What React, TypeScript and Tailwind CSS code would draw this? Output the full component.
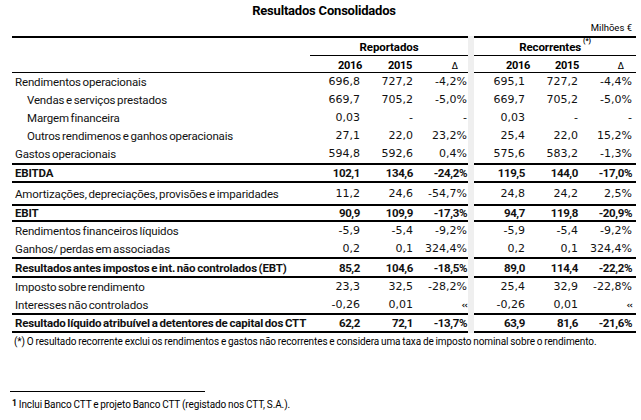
import React from "react";

type R = {
  label: string;
  v: string[];
  bold?: boolean;
  indent?: boolean;
  h: string;
  thick?: boolean;
};

const rows: R[] = [
  { label: "Rendimentos operacionais", v: ["696,8", "727,2", "-4,2%", "695,1", "727,2", "-4,4%"], h: "h-[18px]" },
  { label: "Vendas e serviços prestados", v: ["669,7", "705,2", "-5,0%", "669,7", "705,2", "-5,0%"], h: "h-[18px]", indent: true },
  { label: "Margem financeira", v: ["0,03", "-", "-", "0,03", "-", "-"], h: "h-[18px]", indent: true },
  { label: "Outros rendimenos e ganhos operacionais", v: ["27,1", "22,0", "23,2%", "25,4", "22,0", "15,2%"], h: "h-[18px]", indent: true },
  { label: "Gastos operacionais", v: ["594,8", "592,6", "0,4%", "575,6", "583,2", "-1,3%"], h: "h-[20px]", thick: true },
  { label: "EBITDA", v: ["102,1", "134,6", "-24,2%", "119,5", "144,0", "-17,0%"], h: "h-[18px]", thick: true, bold: true },
  { label: "Amortizações, depreciações, provisões e imparidades", v: ["11,2", "24,6", "-54,7%", "24,8", "24,2", "2,5%"], h: "h-[23px]", thick: true },
  { label: "EBIT", v: ["90,9", "109,9", "-17,3%", "94,7", "119,8", "-20,9%"], h: "h-[16px]", thick: true, bold: true },
  { label: "Rendimentos financeiros líquidos", v: ["-5,9", "-5,4", "-9,2%", "-5,9", "-5,4", "-9,2%"], h: "h-[18px]" },
  { label: "Ganhos/ perdas em associadas", v: ["0,2", "0,1", "324,4%", "0,2", "0,1", "324,4%"], h: "h-[19px]", thick: true },
  { label: "Resultados antes impostos e int. não controlados (EBT)", v: ["85,2", "104,6", "-18,5%", "89,0", "114,4", "-22,2%"], h: "h-[19px]", thick: true, bold: true },
  { label: "Imposto sobre rendimento", v: ["23,3", "32,5", "-28,2%", "25,4", "32,9", "-22,8%"], h: "h-[18px]" },
  { label: "Interesses não controlados", v: ["-0,26", "0,01", "‹‹", "-0,26", "0,01", "‹‹"], h: "h-[19px]", thick: true },
  { label: "Resultado líquido atribuível a detentores de capital dos CTT", v: ["62,2", "72,1", "-13,7%", "63,9", "81,6", "-21,6%"], h: "h-[18px]", thick: true, bold: true },
];

const GRID = "grid grid-cols-[298px_52px_52px_54px_6px_56px_50px_56px]";
const numPad = ["pr-[2px]", "pr-[1px]", "pr-[1px]", "pr-[5px]", "pr-[2px]", "pr-[4px]"];
const hdrPad = ["pr-0", "pr-[2px]", "pr-[10px]", "pr-0", "pr-[1px]", "pr-[12px]"];

const LABEL = "[font-family:Roboto,sans-serif] text-[11.5px] leading-[12px] tracking-[-0.15px] [word-spacing:-1px] whitespace-nowrap text-[#111]";

function NumCell({ x, i, r }: { x: string; i: number; r: R }) {
  const border = r.thick ? "border-b-2 border-black" : "";
  const small = x === "‹‹";
  const font = r.bold
    ? "[font-family:Roboto,sans-serif] font-bold text-[11.5px] tracking-[-0.4px]"
    : small
    ? "[font-family:DejaVu_Sans,sans-serif] font-bold text-[9px] tracking-[-1px]"
    : "[font-family:DejaVu_Sans,sans-serif] text-[11px]";
  return (
    <div className={`${r.h} ${border} flex items-center justify-end leading-[12px] whitespace-nowrap text-[#111] ${numPad[i]} ${font}`}>
      {x}
    </div>
  );
}

function Row({ r }: { r: R }) {
  const border = r.thick ? "border-b-2 border-black" : "";
  return (
    <div className={GRID}>
      <div className={`${r.h} ${border} flex items-center ${r.indent ? "pl-[15px]" : "pl-[3px]"} ${LABEL} ${r.bold ? "font-bold" : ""}`}>
        {r.label}
      </div>
      {r.v.slice(0, 3).map((x, i) => (
        <NumCell key={i} x={x} i={i} r={r} />
      ))}
      <div className="bg-[#efefef]" />
      {r.v.slice(3).map((x, i) => (
        <NumCell key={i + 3} x={x} i={i + 3} r={r} />
      ))}
    </div>
  );
}

export default function App() {
  const years = ["2016", "2015", "Δ", "2016", "2015", "Δ"];
  return (
    <div className="w-[641px] h-[420px] bg-white text-black overflow-hidden">
      <div className="ml-[12px] w-[624px]">
        <div className="h-[22px] flex items-center justify-center [font-family:Roboto,sans-serif] font-bold text-[13px] tracking-[-0.2px]">
          Resultados Consolidados
        </div>
        <div className="h-[12px] flex items-center justify-end pr-[4px] [font-family:Roboto,sans-serif] text-[9.5px] leading-[12px]">
          Milhões €
        </div>
        <div className="mt-[2px]">
          {/* header row 1 */}
          <div className={GRID}>
            <div className="h-[20px] border-t-2 border-black" />
            <div className="col-span-3 h-[20px] border-t-2 border-b border-black flex items-center justify-center [font-family:Roboto,sans-serif] font-bold text-[11.5px] leading-[12px] tracking-[-0.1px]">
              Reportados
            </div>
            <div className="bg-[#efefef]" />
            <div className="col-span-3 h-[20px] border-t-2 border-b border-black flex items-center justify-center [font-family:Roboto,sans-serif] font-bold text-[11.5px] leading-[12px] tracking-[-0.1px]">
              <span>Recorrentes</span>
              <span className="text-[7px] leading-[7px] self-start mt-[0px] ml-[2px]">(*)</span>
            </div>
          </div>
          {/* header row 2 */}
          <div className={GRID}>
            <div className="h-[17px] border-b border-black" />
            {years.slice(0, 3).map((y, i) => (
              <div
                key={i}
                className={`h-[17px] border-b border-black flex items-center justify-end pt-[3px] leading-[12px] ${hdrPad[i]} ${
                  y === "Δ" ? "[font-family:DejaVu_Sans,sans-serif] text-[9px]" : "[font-family:Roboto,sans-serif] font-bold text-[11px] tracking-[-0.3px]"
                }`}
              >
                {y}
              </div>
            ))}
            <div className="bg-[#efefef]" />
            {years.slice(3).map((y, i) => (
              <div
                key={i + 3}
                className={`h-[17px] border-b border-black flex items-center justify-end pt-[3px] leading-[12px] ${hdrPad[i + 3]} ${
                  y === "Δ" ? "[font-family:DejaVu_Sans,sans-serif] text-[9px]" : "[font-family:Roboto,sans-serif] font-bold text-[11px] tracking-[-0.3px]"
                }`}
              >
                {y}
              </div>
            ))}
          </div>
          {rows.map((r, k) => (
            <Row key={k} r={r} />
          ))}
        </div>
        <div className="mt-[3px] h-[12px] flex items-center pl-[2px] [font-family:Roboto,sans-serif] text-[10px] leading-[12px] tracking-[-0.1px] [word-spacing:-0.5px] whitespace-nowrap">
          (*) O resultado recorrente exclui os rendimentos e gastos não recorrentes e considera uma taxa de imposto nominal sobre o rendimento.
        </div>
        <div className="mt-[43px] -ml-[2px] h-[1px] w-[195px] bg-black" />
        <div className="mt-[7px] h-[12px] flex items-center [font-family:Roboto,sans-serif] text-[10px] leading-[12px] tracking-[-0.1px] [word-spacing:-0.5px] whitespace-nowrap">
          <span className="font-bold text-[8.5px] self-start leading-[8px] mr-[2px]">1</span>
          <span>Inclui Banco CTT e projeto Banco CTT (registado nos CTT, S.A.).</span>
        </div>
      </div>
    </div>
  );
}
